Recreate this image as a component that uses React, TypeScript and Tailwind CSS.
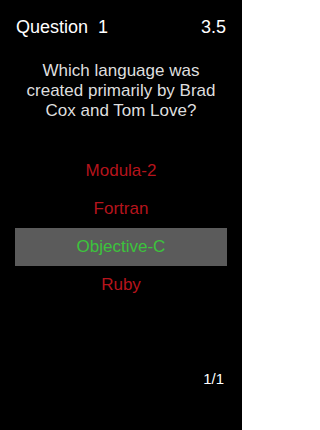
const answers = [
  { label: "Modula-2", correct: false },
  { label: "Fortran", correct: false },
  { label: "Objective-C", correct: true },
  { label: "Ruby", correct: false },
];

export default function App() {
  return (
    <div
      className="flex h-[430px] w-[242px] flex-col bg-black text-white"
      style={{ fontFamily: '"Liberation Sans", Arial, sans-serif' }}
    >
      <div className="flex items-center justify-between px-4 pt-4 text-[18px] leading-[22px]">
        <span className="whitespace-pre">Question  1</span>
        <span>3.5</span>
      </div>
      <p className="mx-auto mt-[23px] w-[200px] text-center text-[17px] leading-[20px] text-[#dedede]">
        Which language was created primarily by Brad Cox and Tom Love?
      </p>
      <ul className="mt-[31px] flex flex-col">
        {answers.map((a) => (
          <li
            key={a.label}
            className={
              a.correct
                ? "mx-[15px] flex h-[38px] items-center justify-center bg-[#5b5b5b] text-[17px] text-[#3cc43c]"
                : "mx-[15px] flex h-[38px] items-center justify-center text-[17px] text-[#b5141c]"
            }
          >
            {a.label}
          </li>
        ))}
      </ul>
      <div className="flex flex-1 items-end justify-end pb-[42px] pr-[18px] text-[15px] leading-[18px]">
        1/1
      </div>
    </div>
  );
}
